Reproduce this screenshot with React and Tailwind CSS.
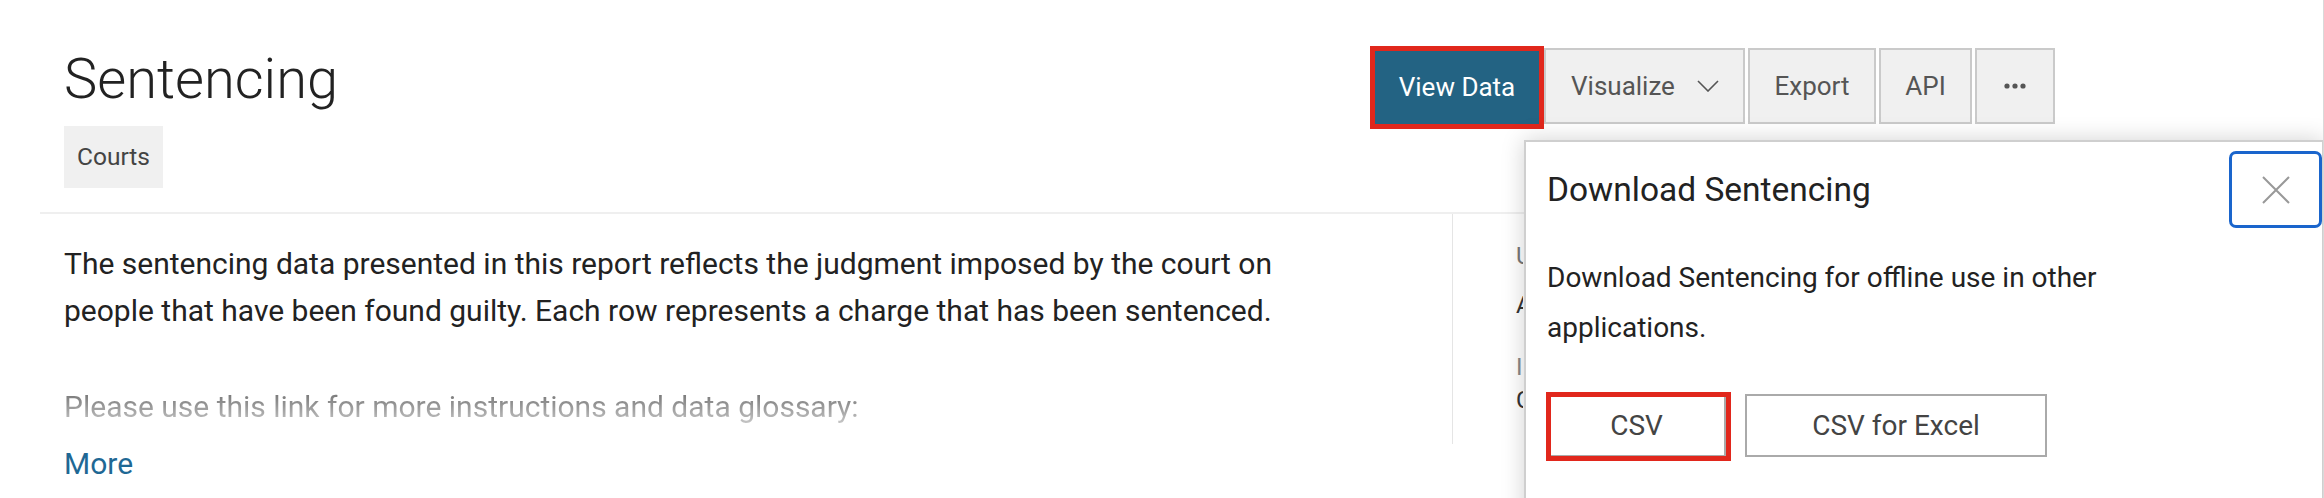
import React from 'react';

const GrayButton = ({ className = '', children }) => (
  <button
    className={`mt-[2px] h-[76px] border-2 border-[#cacaca] bg-[#f0f0f0] text-[26px] text-[#555] flex items-center justify-center ${className}`}
  >
    {children}
  </button>
);

const App = () => {
  return (
    <div className="relative w-[2324px] h-[498px] overflow-hidden bg-white border-r border-[#d9d9d9] font-['Roboto','Liberation_Sans',sans-serif]">
      {/* Header */}
      <div className="flex justify-between pr-[268px]">
        <div className="pl-[64px] pt-[51px]">
          <h1 className="text-[56px] leading-[56px] font-light text-[#222]">Sentencing</h1>
          <div className="mt-[19px] inline-block h-[62px] px-[13px] bg-[#f0f0f0] text-[24.5px] leading-[62px] text-[#444]">
            Courts
          </div>
        </div>
        <div className="mt-[46px] flex items-start">
          <button className="w-[174px] h-[83px] border-[5px] border-[#e1271c] bg-[#236383] text-[26px] text-white">
            View Data
          </button>
          <GrayButton className="w-[201px] justify-start pl-[25px]">
            Visualize
            <svg width="22" height="12" viewBox="0 0 22 12" className="ml-[22px]">
              <path d="M1 1 L11 11 L21 1" fill="none" stroke="#555" strokeWidth="1.6" />
            </svg>
          </GrayButton>
          <GrayButton className="ml-[3px] w-[128px]">Export</GrayButton>
          <GrayButton className="ml-[3px] w-[93px]">API</GrayButton>
          <GrayButton className="ml-[3px] w-[80px]">
            <svg width="22" height="6" viewBox="0 0 22 6">
              <circle cx="3" cy="3" r="2.6" fill="#555" />
              <circle cx="11" cy="3" r="2.6" fill="#555" />
              <circle cx="19" cy="3" r="2.6" fill="#555" />
            </svg>
          </GrayButton>
        </div>
      </div>

      <div className="mt-[24px] ml-[40px] h-[2px] bg-[#efefef]" />

      {/* Body */}
      <div className="flex ml-[40px]">
        <div className="w-[1412px] pl-[24px] pt-[26px]">
          <p className="w-[1265px] text-[30px] leading-[47px] text-[#222]">
            The sentencing data presented in this report reflects the judgment imposed by the court on people that
            have been found guilty. Each row represents a charge that has been sentenced.
          </p>
          <p className="mt-[49px] w-fit text-[30px] leading-[47px] bg-linear-to-b from-[#5f5f5f] to-[#d8d8d8] bg-clip-text text-transparent">
            Please use this link for more instructions and data glossary:
          </p>
          <a className="block mt-[10px] text-[30px] leading-[47px] text-[#1f6894]">More</a>
        </div>
        <div className="w-px h-[230px] bg-[#e5e5e5]" />
        <div className="w-[70px] overflow-hidden pl-[63px] pt-[26px] whitespace-nowrap text-[24px] leading-[32px]">
          <div className="text-[#777]">Updated</div>
          <div className="mt-[17px] text-[#333]">April 9, 2024</div>
          <div className="mt-[30px] text-[#888]">Information</div>
          <div className="mt-[1px] text-[#333]">Courts</div>
        </div>
      </div>

      {/* Download popover */}
      <div className="absolute left-[1524px] top-[140px] w-[800px] h-[400px] border-2 border-[#cfcfcf] bg-white shadow-[0_0_22px_rgba(0,0,0,0.18)]">
        <div className="pl-[21px]">
          <div className="flex items-start justify-between">
            <h2 className="mt-[28px] text-[33.5px] leading-[40px] text-[#222]">Download Sentencing</h2>
            <button className="mt-[9px] w-[93px] h-[77px] rounded-[7px] border-[3px] border-[#1a65cc] flex items-center justify-center">
              <svg width="30" height="30" viewBox="0 0 30 30">
                <path d="M2 2 L28 28 M28 2 L2 28" stroke="#999" strokeWidth="2" fill="none" />
              </svg>
            </button>
          </div>
          <p className="mt-[25px] w-[680px] text-[28px] leading-[50px] text-[#222]">
            Download Sentencing for offline use in other applications.
          </p>
          <div className="mt-[41px] flex">
            <div className="relative">
              <button className="w-[179px] h-[63px] border-2 border-[#aaa] bg-white text-[28px] text-[#444]">CSV</button>
              <div className="absolute -left-px -top-[2px] -right-[5px] -bottom-[4px] border-[5px] border-[#e1271c] pointer-events-none" />
            </div>
            <button className="ml-[19px] w-[302px] h-[63px] border-2 border-[#aaa] bg-white text-[28px] text-[#444]">
              CSV for Excel
            </button>
          </div>
        </div>
      </div>
    </div>
  );
};

export default App;
